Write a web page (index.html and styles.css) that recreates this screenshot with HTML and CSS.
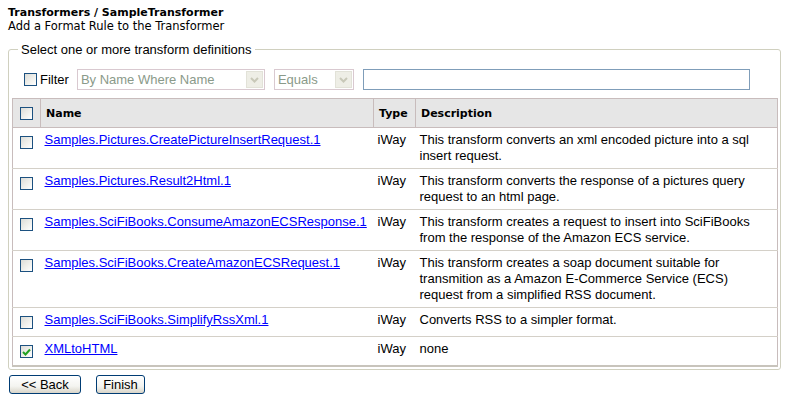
FILE: index.html
```html
<!DOCTYPE html>
<html lang="en">
  <head>
    <meta charset="UTF-8" />
    <title>Add a Format Rule</title>
    <link rel="stylesheet" href="styles.css">
  </head>

  <body>
    <div class="page-title">Transformers / SampleTransformer</div>
    <div class="page-subtitle">Add a Format Rule to the Transformer</div>

    <fieldset class="picker">
      <legend>Select one or more transform definitions</legend>

      <div class="filter-row">
        <span class="cb"></span>
        <span class="filter-label">Filter</span>
        <div class="select select-where">
          <span class="select-text">By Name Where Name</span>
          <span class="select-btn">
            <svg width="9" height="6" viewBox="0 0 9 6"><path d="M1 1 L4.5 4.5 L8 1" fill="none" stroke="#c8c8b8" stroke-width="2"/></svg>
          </span>
        </div>
        <div class="select select-op">
          <span class="select-text">Equals</span>
          <span class="select-btn">
            <svg width="9" height="6" viewBox="0 0 9 6"><path d="M1 1 L4.5 4.5 L8 1" fill="none" stroke="#c8c8b8" stroke-width="2"/></svg>
          </span>
        </div>
        <div class="text-input"></div>
      </div>

      <table class="defs">
        <colgroup>
          <col class="col-cb">
          <col class="col-name">
          <col class="col-type">
          <col class="col-desc">
        </colgroup>
        <thead>
          <tr>
            <th class="cb-cell"><span class="cb"></span></th>
            <th>Name</th>
            <th>Type</th>
            <th>Description</th>
          </tr>
        </thead>
        <tbody>
          <tr>
            <td class="cb-cell"><span class="cb"></span></td>
            <td><a href="#">Samples.Pictures.CreatePictureInsertRequest.1</a></td>
            <td>iWay</td>
            <td>This transform converts an xml encoded picture into a sql insert request.</td>
          </tr>
          <tr>
            <td class="cb-cell"><span class="cb"></span></td>
            <td><a href="#">Samples.Pictures.Result2Html.1</a></td>
            <td>iWay</td>
            <td>This transform converts the response of a pictures query request to an html page.</td>
          </tr>
          <tr>
            <td class="cb-cell"><span class="cb"></span></td>
            <td><a href="#">Samples.SciFiBooks.ConsumeAmazonECSResponse.1</a></td>
            <td>iWay</td>
            <td>This transform creates a request to insert into SciFiBooks from the response of the Amazon ECS service.</td>
          </tr>
          <tr>
            <td class="cb-cell"><span class="cb"></span></td>
            <td><a href="#">Samples.SciFiBooks.CreateAmazonECSRequest.1</a></td>
            <td>iWay</td>
            <td>This transform creates a soap document suitable for transmition as a Amazon E-Commerce Service (ECS) request from a simplified RSS document.</td>
          </tr>
          <tr>
            <td class="cb-cell"><span class="cb"></span></td>
            <td><a href="#">Samples.SciFiBooks.SimplifyRssXml.1</a></td>
            <td>iWay</td>
            <td>Converts RSS to a simpler format.</td>
          </tr>
          <tr>
            <td class="cb-cell">
              <span class="cb checked">
                <svg width="9" height="8" viewBox="0 0 9 8"><path d="M1 4 L3.5 6.5 L8 1.5" fill="none" stroke="#21a121" stroke-width="2"/></svg>
              </span>
            </td>
            <td><a href="#">XMLtoHTML</a></td>
            <td>iWay</td>
            <td>none</td>
          </tr>
        </tbody>
      </table>
    </fieldset>

    <div class="actions">
      <button class="btn btn-back">&lt;&lt; Back</button>
      <button class="btn btn-finish">Finish</button>
    </div>
  </body>
</html>
```

FILE: styles.css
```css
body {
  margin: 0;
  padding: 6px 8px 0 8px;
  font-family: "Liberation Sans", Arial, sans-serif;
  font-size: 13px;
  color: #000;
  background-color: #fff;
}

.page-title {
  font-family: "DejaVu Sans", Verdana, sans-serif;
  font-weight: bold;
  font-size: 11px;
  line-height: 14px;
}

.page-subtitle {
  font-family: "DejaVu Sans", Verdana, sans-serif;
  font-size: 11.5px;
  line-height: 13px;
}

.picker {
  margin: 9px 4px 0 0;
  padding: 12px 2px 2px 3px;
  border: 1px solid #d0d0bf;
  border-radius: 3px;
}

.picker legend {
  padding: 0 3px;
  margin-left: 6px;
  font-size: 13px;
  line-height: 15px;
}

.cb {
  display: inline-flex;
  align-items: center;
  justify-content: center;
  box-sizing: border-box;
  width: 13px;
  height: 13px;
  border: 1px solid #1c5180;
  background: linear-gradient(135deg, #dcdcd7 0%, #f2f2ee 60%, #ffffff 100%);
  vertical-align: top;
}

.filter-row {
  display: flex;
  align-items: center;
  height: 21px;
  margin: 0 0 8px 0;
  padding-left: 12px;
}

.filter-label {
  margin-left: 3px;
  margin-right: 8px;
}

.select {
  display: flex;
  box-sizing: border-box;
  height: 21px;
  border: 1px solid #d9c9d0;
  background-color: #fff;
  margin-right: 9px;
}

.select-where {
  width: 188px;
}

.select-op {
  width: 80px;
}

.select-text {
  flex: 1;
  padding-left: 3px;
  color: #8a9a8a;
  line-height: 19px;
}

.select-btn {
  display: flex;
  align-items: center;
  justify-content: center;
  width: 17px;
  margin: 1px;
  background-color: #eeeee6;
  border: 1px solid #e2e2d8;
  box-sizing: border-box;
}

.text-input {
  box-sizing: border-box;
  width: 387px;
  height: 21px;
  border: 1px solid #7f9db9;
  background-color: #fff;
}

.defs {
  width: 766px;
  border-collapse: collapse;
  table-layout: fixed;
  border: 1px solid #c8bcbc;
  border-bottom: 2px solid #c8c4bc;
}

.col-cb {
  width: 28px;
}

.col-name {
  width: 333px;
}

.col-type {
  width: 42px;
}

.defs th {
  background-color: #e6e6e6;
  border: 1px solid #c8bcbc;
  height: 28px;
  padding: 0 5px;
  text-align: left;
  font-family: "DejaVu Sans", Verdana, sans-serif;
  font-size: 11px;
  font-weight: bold;
  vertical-align: middle;
}

.defs td {
  border-top: 1px solid #d4d0c8;
  padding: 4px 4px 4px 4px;
  line-height: 16px;
  vertical-align: top;
}

.defs th.cb-cell,
.defs td.cb-cell {
  padding-left: 7px;
  padding-right: 0;
}

.defs td.cb-cell .cb {
  margin-top: 4px;
  margin-bottom: 3px;
}

.defs a {
  color: #0000ff;
}

.actions {
  display: flex;
  gap: 15px;
  margin-top: 5px;
  padding-left: 1px;
}

.btn {
  box-sizing: border-box;
  height: 19px;
  padding: 0 6px;
  font-family: "Liberation Sans", Arial, sans-serif;
  font-size: 13px;
  line-height: 15px;
  color: #000;
  border: 1px solid #003c74;
  border-radius: 3px;
  background: linear-gradient(#ffffff 0%, #f4f4f0 60%, #d8d4c8 100%);
}

.btn-back {
  width: 72px;
}

.btn-finish {
  width: 49px;
}
```
